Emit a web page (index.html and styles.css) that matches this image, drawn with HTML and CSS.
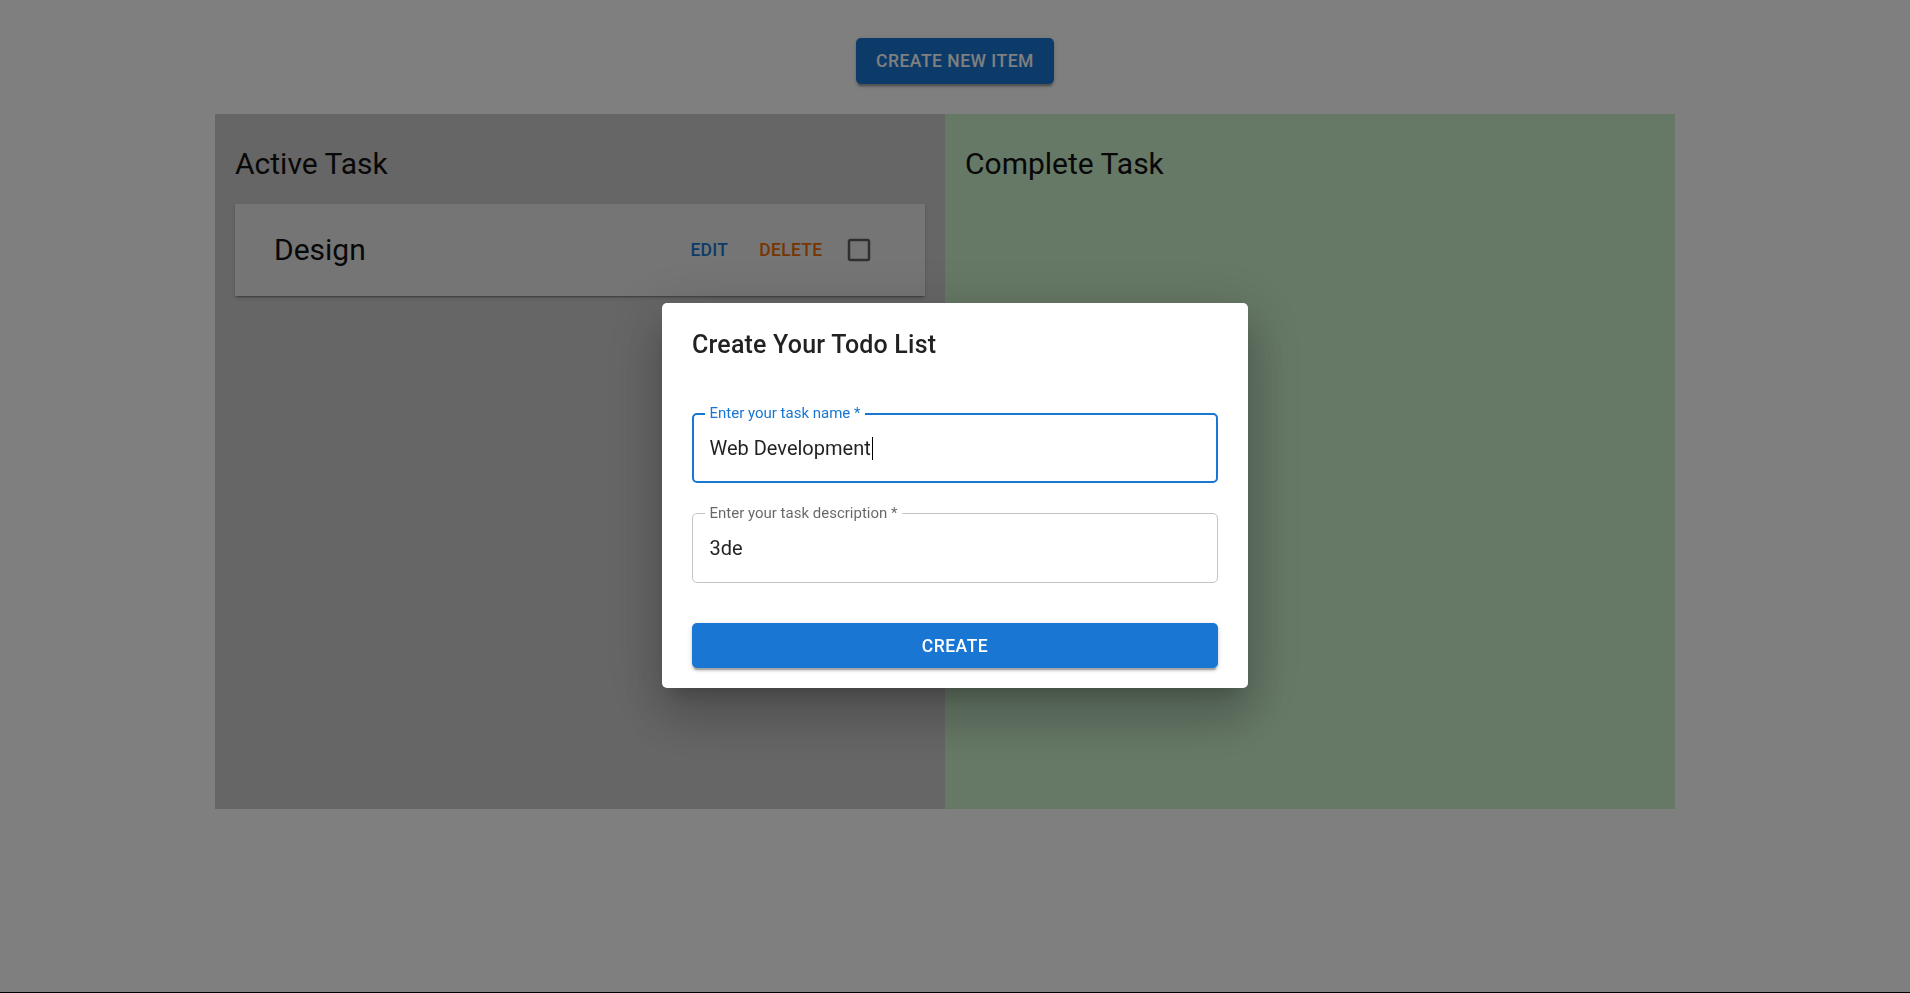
FILE: index.html
```html
<!DOCTYPE html>
<html lang="en">
<head>
<meta charset="utf-8">
<title>Todo</title>
<link rel="stylesheet" href="styles.css">
</head>
<body>
<header class="top">
  <button class="btn-contained btn-new">CREATE NEW ITEM</button>
</header>
<main class="board">
  <section class="panel panel-active">
    <h2 class="panel-title">Active Task</h2>
    <div class="card">
      <span class="card-name">Design</span>
      <div class="actions">
        <button class="text-btn edit">EDIT</button>
        <button class="text-btn delete">DELETE</button>
        <span class="check">
          <svg viewBox="0 0 24 24" width="30" height="30"><path fill="rgba(0,0,0,0.6)" d="M19 5v14H5V5h14m0-2H5c-1.1 0-2 .9-2 2v14c0 1.1.9 2 2 2h14c1.1 0 2-.9 2-2V5c0-1.1-.9-2-2-2z"/></svg>
        </span>
      </div>
    </div>
  </section>
  <section class="panel panel-complete">
    <h2 class="panel-title">Complete Task</h2>
  </section>
</main>
<div class="backdrop">
  <div class="dialog">
    <h2 class="dialog-title">Create Your Todo List</h2>
    <form class="form">
      <div class="field field-focused">
        <span class="field-label">Enter your task name *</span>
        <span class="field-value">Web Development<span class="caret"></span></span>
      </div>
      <div class="field field-desc">
        <span class="field-label">Enter your task description *</span>
        <span class="field-value">3de</span>
      </div>
      <button type="button" class="btn-contained btn-create">CREATE</button>
    </form>
  </div>
</div>
<div class="bottom-line"></div>
</body>
</html>
```

FILE: styles.css
```css
html, body {
  margin: 0;
  padding: 0;
}
body {
  background: #ffffff;
  font-family: Roboto, "Liberation Sans", Arial, sans-serif;
  height: 993px;
  overflow: hidden;
}

.top {
  display: flex;
  justify-content: center;
  padding-top: 38px;
}

.btn-contained {
  border: none;
  background: #1976d2;
  color: #ffffff;
  font-family: Roboto, "Liberation Sans", Arial, sans-serif;
  font-weight: 500;
  font-size: 17.5px;
  letter-spacing: 0.5px;
  border-radius: 5px;
  box-shadow: 0 4px 1px -2.5px rgba(0,0,0,0.2), 0 2.5px 2.5px 0 rgba(0,0,0,0.14), 0 1px 6px 0 rgba(0,0,0,0.12);
  cursor: pointer;
}
.btn-new {
  height: 46px;
  padding: 0 20px;
}

.board {
  display: flex;
  width: 1460px;
  height: 695px;
  margin: 30px 0 0 215px;
}
.panel {
  flex: 1;
  padding: 20px;
  box-sizing: border-box;
}
.panel-active {
  background: #cccccc;
}
.panel-complete {
  background: #ccf0cc;
}
.panel-title {
  margin: 13px 0 23px;
  font-size: 30px;
  line-height: 34px;
  font-weight: 400;
  color: #111111;
}

.card {
  height: 92px;
  background: #eaeaea;
  display: flex;
  align-items: center;
  justify-content: space-between;
  padding: 0 40px 0 39px;
  box-shadow: 0 2.5px 1.5px -1.5px rgba(0,0,0,0.2), 0 1.5px 1.5px 0 rgba(0,0,0,0.14), 0 1.5px 4px 0 rgba(0,0,0,0.12);
}
.card-name {
  font-size: 30px;
  line-height: 34px;
  color: #111111;
}
.actions {
  display: flex;
  align-items: center;
}
.text-btn {
  border: none;
  background: transparent;
  padding: 7.5px 10px;
  font-family: Roboto, "Liberation Sans", Arial, sans-serif;
  font-weight: 500;
  font-size: 17.5px;
  letter-spacing: 0.3px;
  line-height: 30px;
}
.edit {
  color: #1976d2;
  margin-right: 11px;
}
.delete {
  color: #ed6c02;
}
.check {
  display: flex;
  padding: 11.25px;
}

.backdrop {
  position: fixed;
  inset: 0;
  background: rgba(0,0,0,0.5);
  display: flex;
  align-items: center;
  justify-content: center;
  padding-bottom: 2px;
  box-sizing: border-box;
}
.dialog {
  width: 586px;
  box-sizing: border-box;
  background: #ffffff;
  border-radius: 5px;
  padding: 20px 30px 20px 30px;
  box-shadow: 0 14px 19px -9px rgba(0,0,0,0.2), 0 30px 48px 4px rgba(0,0,0,0.14), 0 11px 57px 10px rgba(0,0,0,0.12);
}
.dialog-title {
  margin: 2px 0 0;
  font-size: 25px;
  line-height: 40px;
  font-weight: 500;
  letter-spacing: 0.2px;
  color: rgba(0,0,0,0.87);
}
.form {
  margin-top: 48px;
  display: flex;
  flex-direction: column;
}
.field {
  position: relative;
  height: 70px;
  box-sizing: border-box;
  border: 1px solid #c4c4c4;
  border-radius: 5px;
  padding: 0 16.5px;
  display: flex;
  align-items: center;
}
.field-focused {
  border: 2px solid #1976d2;
  padding: 0 15.5px;
}
.field-desc {
  margin-top: 30px;
}
.field-label {
  position: absolute;
  top: -10px;
  left: 11.5px;
  padding: 0 5px;
  background: #ffffff;
  font-size: 15px;
  line-height: 18px;
  color: rgba(0,0,0,0.6);
}
.field-focused .field-label {
  top: -11px;
  left: 10.5px;
  color: #1976d2;
}
.field-value {
  font-size: 20px;
  line-height: 28px;
  color: rgba(0,0,0,0.87);
  display: flex;
  align-items: center;
}
.caret {
  display: inline-block;
  width: 1px;
  height: 23px;
  background: #000000;
  margin-left: 1px;
}
.btn-create {
  margin-top: 40px;
  height: 45px;
  width: 100%;
}

.bottom-line {
  position: fixed;
  left: 0;
  right: 0;
  bottom: 0;
  height: 1px;
  background: #000000;
}
```
